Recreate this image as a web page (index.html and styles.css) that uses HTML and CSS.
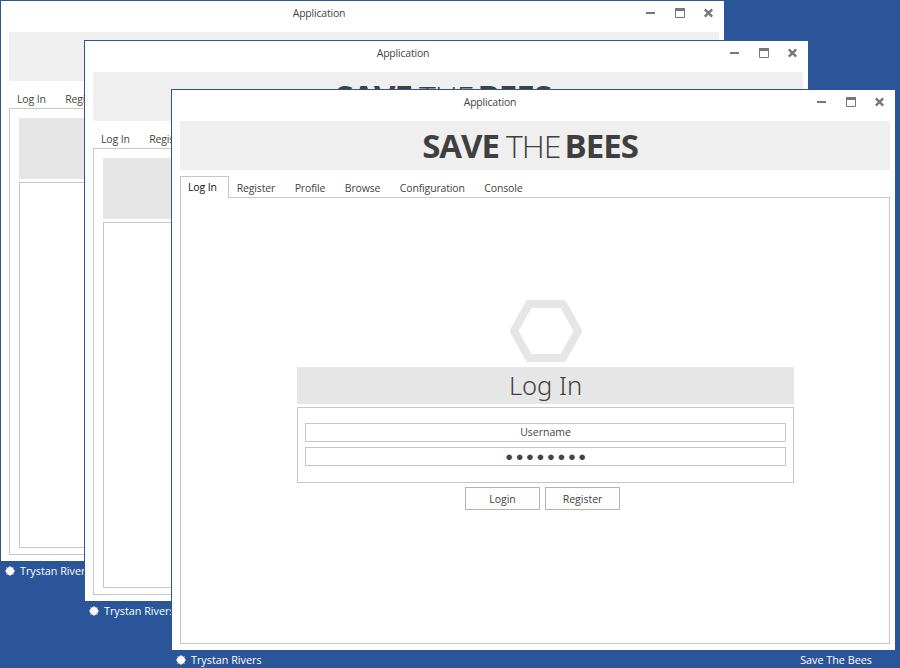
FILE: index.html
```html
<!DOCTYPE html>
<html lang="en">
<head>
    <meta charset="UTF-8">
    <title>Save The Bees</title>
    <link rel="stylesheet" href="styles.css">
</head>
<body>

    <!-- shared icons -->
    <svg class="defs" width="0" height="0">
        <symbol id="icon-min" viewBox="0 0 12 12"><path d="M1 6h9" stroke="#777" stroke-width="2"/></symbol>
        <symbol id="icon-max" viewBox="0 0 12 12"><path d="M1.5 1.5h9v9h-9z" fill="none" stroke="#777"/><path d="M1 1h10v3H1z" fill="#777"/></symbol>
        <symbol id="icon-close" viewBox="0 0 12 12"><path d="M1.8 2.3l7.4 7.4M9.2 2.3l-7.4 7.4" stroke="#777" stroke-width="2.4"/></symbol>
        <symbol id="icon-user" viewBox="0 0 10 10"><circle cx="5" cy="5" r="4" fill="#fff"/><path d="M5 0v10M0 5h10M1.6 1.6l6.8 6.8M8.4 1.6l-6.8 6.8" stroke="#fff"/></symbol>
    </svg>

    <!-- window 1, back -->
    <div class="window win-back">
        <div class="titlebar">
            <span class="title">Application</span>
            <div class="controls">
                <svg width="12" height="12"><use href="#icon-min"/></svg>
                <svg width="12" height="12"><use href="#icon-max"/></svg>
                <svg width="12" height="12"><use href="#icon-close"/></svg>
            </div>
        </div>
        <div class="banner"><b>SAVE</b> <i>THE</i> <b>BEES</b></div>
        <div class="tabs">
            <a href="#">Log In</a>
            <a href="#">Register</a>
            <a href="#">Profile</a>
            <a href="#" class="active">Browse</a>
            <a href="#">Configuration</a>
            <a href="#">Console</a>
        </div>
        <div class="panel browse">
            <div class="browse-head"></div>
            <div class="browse-list"></div>
        </div>
    </div>
    <div class="status win-back-status">
        <span class="user"><svg width="10" height="10"><use href="#icon-user"/></svg>Trystan Rivers</span>
        <span>Save The Bees</span>
    </div>

    <!-- window 2, middle -->
    <div class="window win-mid">
        <div class="titlebar">
            <span class="title">Application</span>
            <div class="controls">
                <svg width="12" height="12"><use href="#icon-min"/></svg>
                <svg width="12" height="12"><use href="#icon-max"/></svg>
                <svg width="12" height="12"><use href="#icon-close"/></svg>
            </div>
        </div>
        <div class="banner"><b>SAVE</b> <i>THE</i> <b>BEES</b></div>
        <div class="tabs">
            <a href="#">Log In</a>
            <a href="#">Register</a>
            <a href="#">Profile</a>
            <a href="#" class="active">Browse</a>
            <a href="#">Configuration</a>
            <a href="#">Console</a>
        </div>
        <div class="panel browse">
            <div class="browse-head"></div>
            <div class="browse-list"></div>
        </div>
    </div>
    <div class="status win-mid-status">
        <span class="user"><svg width="10" height="10"><use href="#icon-user"/></svg>Trystan Rivers</span>
        <span>Save The Bees</span>
    </div>

    <!-- window 3, front -->
    <div class="window win-front">
        <div class="titlebar">
            <span class="title">Application</span>
            <div class="controls">
                <svg width="12" height="12"><use href="#icon-min"/></svg>
                <svg width="12" height="12"><use href="#icon-max"/></svg>
                <svg width="12" height="12"><use href="#icon-close"/></svg>
            </div>
        </div>
        <div class="banner"><b>SAVE</b> <i>THE</i> <b>BEES</b></div>
        <div class="tabs">
            <a href="#" class="active">Log In</a>
            <a href="#">Register</a>
            <a href="#">Profile</a>
            <a href="#">Browse</a>
            <a href="#">Configuration</a>
            <a href="#">Console</a>
        </div>
        <div class="panel login">
            <svg class="hex" width="72" height="62" viewBox="0 0 72 62"><path d="M19 4h34l15 27-15 27H19L4 31z" fill="none" stroke="#e6e6e6" stroke-width="8"/></svg>
            <h2>Log In</h2>
            <div class="login-box">
                <div class="field">Username</div>
                <div class="field dots">&#9679;&#9679;&#9679;&#9679;&#9679;&#9679;&#9679;&#9679;</div>
            </div>
            <div class="buttons">
                <button>Login</button>
                <button>Register</button>
            </div>
        </div>
    </div>
    <div class="status win-front-status">
        <span class="user"><svg width="10" height="10"><use href="#icon-user"/></svg>Trystan Rivers</span>
        <span>Save The Bees</span>
    </div>

</body>
</html>
```

FILE: styles.css
```css
html, body {
    height: 100%;
}

body {
    font-family: "Open Sans", Arial, sans-serif;
    font-size: 10.5px;
    margin: 0;
    background-color: #2a5699;
    overflow: hidden;
    position: relative;
    color: #444;
}

.defs {
    position: absolute;
}

.window {
    position: absolute;
    isolation: isolate;
    width: 724px;
    height: 561px;
    box-sizing: border-box;
    background-color: #fff;
    border-top: 1px solid #2a5699;
    border-left: 1px solid #2a5699;
    display: flex;
    flex-direction: column;
}

.win-back { left: 0; top: 0; }
.win-mid { left: 84px; top: 40px; }
.win-front { left: 171px; top: 89px; }

.titlebar {
    height: 31px;
    flex: none;
    display: flex;
    align-items: center;
    justify-content: center;
    position: relative;
    padding: 0 87px 8px 0;
    box-sizing: border-box;
    letter-spacing: -0.2px;
}

.controls {
    position: absolute;
    right: 9px;
    top: 6px;
    display: flex;
    gap: 17px;
}

.banner {
    margin: 0 5px 0 8px;
    padding: 0 10px 1px 0;
    height: 49px;
    box-sizing: border-box;
    flex: none;
    background-color: #efefef;
    display: flex;
    align-items: center;
    justify-content: center;
    gap: 7px;
    font-size: 33px;
    color: #3f3f3f;
    letter-spacing: -1px;
}

.banner b {
    font-weight: 700;
}

.banner i {
    font-style: normal;
    font-weight: 300;
    font-size: 32px;
    margin-right: -3px;
}

.tabs {
    margin: 6px 5px 0 8px;
    height: 21px;
    flex: none;
    display: flex;
    box-sizing: border-box;
    padding-top: 3px;
}

.tabs a {
    color: #444;
    text-decoration: none;
    padding: 0 8px;
    margin-right: 3.5px;
    line-height: 19px;
    letter-spacing: -0.15px;
}

.tabs a.active {
    color: #111;
    background-color: #fff;
    border: 1px solid #c6c6c6;
    border-bottom: 0;
    margin: -3px 0 -1px 0;
    padding: 0 11px 0 7px;
    line-height: 20px;
    position: relative;
    z-index: 1;
}

.panel {
    margin: 0 5px 6px 8px;
    flex: 1;
    border: 1px solid #c6c6c6;
    box-sizing: border-box;
    display: flex;
    flex-direction: column;
}

.browse {
    padding: 9px 6px 6px 9px;
}

.browse-head {
    height: 61px;
    background-color: #e6e6e6;
    flex: none;
}

.browse-list {
    flex: 1;
    margin-top: 3px;
    border: 1px solid #c6c6c6;
}

.login {
    align-items: center;
    padding: 102px 0 0 21px;
}

.hex {
    display: block;
}

.login h2 {
    width: 497px;
    height: 37px;
    margin: 5px 0 0;
    background-color: #e6e6e6;
    font-family: "Noto Sans", Arial, sans-serif;
    font-weight: 300;
    font-size: 25.5px;
    line-height: 37px;
    text-align: center;
    color: #3f3f3f;
}

.login-box {
    width: 497px;
    height: 76px;
    box-sizing: border-box;
    margin-top: 3px;
    padding: 15px 7px 0;
    border: 1px solid #c6c6c6;
    display: flex;
    flex-direction: column;
    gap: 5px;
}

.field {
    height: 19px;
    box-sizing: border-box;
    border: 1px solid #c6c6c6;
    text-align: center;
    line-height: 16px;
}

.dots {
    font-size: 13px;
    letter-spacing: 2.6px;
    line-height: 17px;
    padding-left: 3px;
}

.buttons {
    display: flex;
    gap: 5px;
    margin: 4px 6px 0 0;
}

.buttons button {
    width: 75px;
    height: 23px;
    background-color: #fdfdfd;
    border: 1px solid #b4b4b4;
    font: inherit;
    color: #444;
    padding: 0;
}

.status {
    position: absolute;
    width: 724px;
    height: 20px;
    box-sizing: border-box;
    display: flex;
    justify-content: space-between;
    padding: 0 23px 0 5px;
    color: #fff;
    font-size: 10.8px;
    line-height: 20px;
}

.win-back-status { left: 0; top: 561px; }
.win-mid-status { left: 84px; top: 601px; }
.win-front-status { left: 171px; top: 650px; }

.user {
    display: flex;
    align-items: center;
    gap: 5px;
}
```
